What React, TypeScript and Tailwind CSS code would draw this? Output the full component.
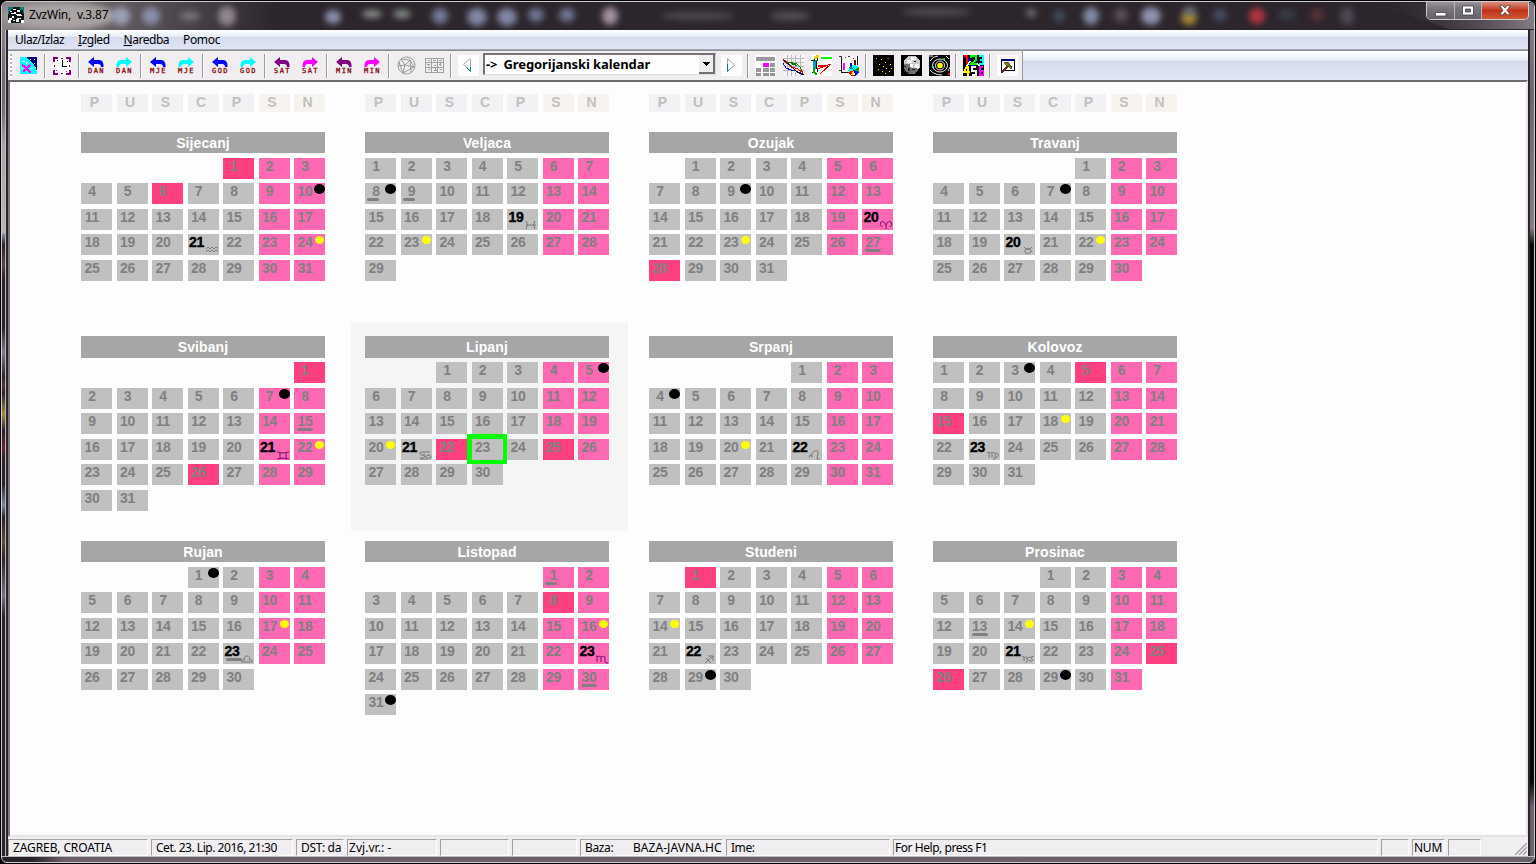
import React from "react";

type Kind = "new" | "full";

interface MonthData {
  name: string;
  start: number;
  days: number;
  holidays?: number[];
  underlined?: number[];
  newMoon: number;
  fullMoon: number;
  zodiacDay: number;
  zodiac: string;
  selected?: number;
}

const MONTHS: MonthData[] = [
  { name: "Sijecanj", start: 4, days: 31, holidays: [1, 6], newMoon: 10, fullMoon: 24, zodiacDay: 21, zodiac: "M0 3l2-2 2 2 2-2 2 2 2-2 2 1M0 6l2-2 2 2 2-2 2 2 2-2 2 1" },
  { name: "Veljaca", start: 0, days: 29, underlined: [8, 9], newMoon: 8, fullMoon: 23, zodiacDay: 19, zodiac: "M1 0q3 3.500 0 8M10 0q-3 3.500 0 8M1 4h10" },
  { name: "Ozujak", start: 1, days: 31, holidays: [28], underlined: [27], newMoon: 9, fullMoon: 23, zodiacDay: 20, zodiac: "M2 6Q-1 4 1 1q3-2 5 3v4M10 6q3-2 1-5q-3-2-5 3" },
  { name: "Travanj", start: 4, days: 30, newMoon: 7, fullMoon: 22, zodiacDay: 20, zodiac: "M2 1q1 2 4 2t4-2M6 3q-4 0-3 3t6 0q1-3-3-3" },
  { name: "Svibanj", start: 6, days: 31, holidays: [1, 26], underlined: [15], newMoon: 7, fullMoon: 22, zodiacDay: 21, zodiac: "M0 1q6 2 12 0M0 8q6-2 12 0M3 2v5M9 2v5" },
  { name: "Lipanj", start: 2, days: 30, holidays: [22, 25], newMoon: 5, fullMoon: 20, zodiacDay: 21, zodiac: "M11 1H3Q0 1 1 3t3 1l5 3q3 1 3-1t-3-2L4 7H1M1 8h8M4 4l2-1", selected: 23 },
  { name: "Srpanj", start: 4, days: 31, newMoon: 4, fullMoon: 20, zodiacDay: 22, zodiac: "M1 7a1.500 1.500 0 1 1 2-1q-1-5 3-6t3 3q-1 3-1 5l3 0" },
  { name: "Kolovoz", start: 0, days: 31, holidays: [5, 15], newMoon: 3, fullMoon: 18, zodiacDay: 23, zodiac: "M0 1l2 1v5M2 2q3-2 3 1v4M5 2q3-2 3 1v5M8 3q4-2 3 2l-5 4" },
  { name: "Rujan", start: 3, days: 30, underlined: [23], newMoon: 1, fullMoon: 17, zodiacDay: 23, zodiac: "M0 7h12M0 5h4q-2-4 2-4t2 4h4" },
  { name: "Listopad", start: 5, days: 31, holidays: [8], underlined: [1, 30], newMoon: 31, fullMoon: 16, zodiacDay: 23, zodiac: "M0 1l1 0v6M1 2q4-2 4 1v4M5 2q4-2 4 1v4q0 1 3 1" },
  { name: "Studeni", start: 1, days: 30, holidays: [1], newMoon: 29, fullMoon: 14, zodiacDay: 22, zodiac: "M2 8L10 1M5 1h5v5M3 3l5 5" },
  { name: "Prosinac", start: 3, days: 31, holidays: [25, 26], underlined: [13], newMoon: 29, fullMoon: 14, zodiacDay: 21, zodiac: "M0 1l2 1v4M2 3q3-3 3 1t-1 4M5 4q3-4 5 0t-4 1M9 2l3-1" },
];

const WEEKDAYS = ["P", "U", "S", "C", "P", "S", "N"];

function Moon({ kind }: { kind: Kind }) {
  return kind === "new" ? (
    <span className="absolute left-[20px] top-px h-[10px] w-[11px] rounded-[50%] bg-black" />
  ) : (
    <span className="absolute left-[21px] top-[2px] h-[8px] w-[9px] rounded-[50%] bg-[#ffff00]" />
  );
}

function Day({ n, col, m }: { n: number; col: number; m: MonthData }) {
  const weekend = col > 4;
  const holiday = m.holidays?.includes(n);
  const bg = holiday ? "bg-[#ff4080]" : weekend ? "bg-[#ff69b4]" : "bg-[#c0c0c0]";
  const isZodiac = m.zodiacDay === n;
  return (
    <div className={`relative h-[21px] w-[31px] ${bg}`}>
      <div
        className={`w-[22px] pt-px text-center text-[14px] leading-[15px] font-bold tracking-[-0.2px] ${
          isZodiac ? "pr-[4px] text-black [-webkit-text-stroke:0.4px_black]" : "text-[#808080]"
        }`}
      >
        {n}
      </div>
      {m.underlined?.includes(n) && (
        <span
          className={`absolute top-[15px] h-[3px] rounded-full bg-[#808080] ${
            n > 9 ? "left-[3px] w-[16px]" : "left-[2px] w-[12px]"
          }`}
        />
      )}
      {m.newMoon === n && <Moon kind="new" />}
      {m.fullMoon === n && <Moon kind="full" />}
      {isZodiac && (
        <svg className="absolute top-[12px] left-[18px] overflow-visible" width="12" height="9" viewBox="0 0 12 9" fill="none" stroke={weekend ? "#700070" : "#707070"} strokeWidth="0.9">
          <path d={m.zodiac} />
        </svg>
      )}
      {m.selected === n && (
        <span className="absolute -top-[5px] -left-[5px] z-10 h-[30px] w-[40px] border-[5px] border-r-4 border-b-4 border-[#00ff00]" />
      )}
    </div>
  );
}

function Month({ m }: { m: MonthData }) {
  const cells: number[] = [];
  for (let i = 1; i <= m.days; i++) cells.push(i);
  return (
    <section className="relative h-[204.5px] w-[244px]">
      {m.selected && <div className="absolute -top-[14px] -left-[14px] h-[208px] w-[277px] bg-[#f3f6f3]" />}
      <h2 className="relative h-[21.500px] bg-[#a6a6a6] text-center text-[14px] leading-[22px] font-bold tracking-[0.1px] text-white">
        {m.name}
      </h2>
      <div className="relative mt-[4.300px] grid auto-rows-[21px] grid-cols-[repeat(7,31px)] gap-x-[4.500px] gap-y-[4.500px]">
        {Array.from({ length: m.start }, (_, i) => (
          <div key={`e${i}`} />
        ))}
        {cells.map((n) => (
          <Day key={n} n={n} col={(m.start + n - 1) % 7} m={m} />
        ))}
      </div>
    </section>
  );
}

function Btn({ children }: { children: React.ReactNode }) {
  return <div className="flex h-[29px] w-[28px] shrink-0 items-center justify-center">{children}</div>;
}

function Sep() {
  return (
    <div className="flex w-[6px] shrink-0 justify-center py-[3px]">
      <div className="h-[24px] w-[2px] border-l border-[#9a989b] bg-white" />
    </div>
  );
}

function Step({ label, color, right }: { label: string; color: string; right?: boolean }) {
  return (
    <div className="flex h-[29px] w-[28px] shrink-0 flex-col items-center pt-[6px]">
      <svg width="16" height="10" viewBox="0 0 16 10" fill={color} className={right ? "-scale-x-100" : ""}>
        <path d="M0 5L6 0V3H11Q15 3 15.500 8V10H13Q13 7 10 7H6V10Z" />
      </svg>
      <div className="mt-px h-[6px] pl-px font-['DejaVu_Sans_Mono',monospace] text-[7px] leading-[7px] tracking-[1.400px] text-[#800000] [-webkit-text-stroke:0.25px_#800000]">
        {label}
      </div>
    </div>
  );
}

function Steps({ label, a, b }: { label: string; a: string; b: string }) {
  return (
    <>
      <Step label={label} color={a} />
      <Step label={label} color={b} right />
      <Sep />
    </>
  );
}

function Icon({ children, size = 21 }: { children: React.ReactNode; size?: number }) {
  return (
    <Btn>
      <svg width={size} height={size} viewBox={`0 0 ${size} ${size}`} fill="none" shapeRendering="crispEdges">
        {children}
      </svg>
    </Btn>
  );
}

const STARS = [[3, 3], [8, 4], [15, 3], [12, 7], [6, 9], [17, 9], [10, 11], [13, 13], [5, 14], [9, 16], [16, 16], [12, 18], [18, 13]];

function Toolbar() {
  return (
    <div className="flex h-[29px] shrink-0 bg-[linear-gradient(to_bottom,#fff_0,#e9f0f8_30%,#d5dbed_36%,#e2e7f5_100%)]">
      <div className="flex w-[1015px] shrink-0 border-r border-[#9a989b] bg-[#f0eef1]">
        <div className="w-[6px] shrink-0 py-[3px] pl-[2px]">
          <div className="h-[24px] w-[2px] bg-[repeating-linear-gradient(to_bottom,#b4b2b5_0_2px,#fff_2px_4px)]" />
        </div>
        <Icon size={17}>
          <path fill="#00ffff" d="M0 0h9l3 3 3 5 2 8v1H0z" />
          <path fill="#000080" d="M6 0h11v14l-3-6-3-4z" />
          <path fill="#ffff00" d="M10 2h1v1h-1zM14 2h1v1h-1zM14 6h1v1h-1zM15 10h1v1h-1z" />
          <path fill="#b8ffff" d="M2 4h3v1H2zM6 5h2v2H6zM8 8h3v1H8zM1 10h2v2H1zM10 11h3v1h-3z" />
          <path stroke="#ff00ff" strokeWidth="2" d="M2 8l3 2 4 4 2 2M10 8L3 15" />
        </Icon>
        <Sep />
        <Icon size={18}>
          <path fill="#fff" d="M0 0h18v18H0z" />
          <path fill="#800080" d="M0 0h5v2H2v3H0zM13 0h5v5h-2V2h-3zM0 13h2v3h3v2H0zM16 13h2v5h-5v-2h3z" />
          <path fill="#602030" d="M8 1h2v1H8zM1 8h1v2H1zM16 8h1v2h-1zM8 16h2v1H8zM4 3h1v1H4zM13 14h1v1h-1zM3 13h1v1H3zM14 4h1v1h-1z" />
          <path fill="#111" d="M9 3h1v7H9zM9 9h5v1H9z" />
        </Icon>
        <Sep />
        <Steps label="DAN" a="#0000ff" b="#00ffff" />
        <Steps label="MJE" a="#0000ff" b="#00ffff" />
        <Steps label="GOD" a="#0000ff" b="#00ffff" />
        <Steps label="SAT" a="#800080" b="#ff00ff" />
        <Steps label="MIN" a="#800080" b="#ff00ff" />
        <Btn>
          <svg width="19" height="19" viewBox="0 0 19 19" fill="none" stroke="#9b9b9b">
            <circle cx="9.5" cy="9.500" r="8.500" />
            <path d="M4 3l9 1 4 7M4 3l4 6 9 2M13 4L8 9 1 10M8 9l-2 8M2 6l4 11 11-6M13 4l1 12" />
          </svg>
        </Btn>
        <Icon size={19}>
          <path stroke="#a0a0a0" d="M.5 2v15M6.500 2v15M12.500 2v15M18.500 2v15M0 2.500h19M0 6.500h19M0 11.500h19M0 16.500h19M3 4.500h2M8 4.500h3M14 4.500h3M2 8.500h3M9 9.500h2M14 8.500h2M3 13.500h2M9 14.500h3M15 13.500h2M3.500 8v2M10.500 12v3M15.500 7v3" />
        </Icon>
        <Sep />
        <Btn>
          <svg width="21" height="21" viewBox="0 0 21 21" fill="none">
            <path fill="#fdfdfd" d="M0 0h21v21H0z" />
            <path stroke="#aaa" d="M12.500 16L5.500 9.500L12 3.500M12.500 4v8" />
            <path stroke="#008080" d="M12.500 12v4.500l-4-4" />
          </svg>
        </Btn>
        <div className="mt-[2px] mr-px ml-px flex h-[22px] w-[233px] shrink-0 items-stretch self-start border-t-2 border-r border-b border-l-2 border-t-[#747276] border-r-[#d8d6d9] border-b-[#e0dee1] border-l-[#747276] bg-[#fdfdfd]">
          <div className="flex flex-1 gap-[6px] pl-px text-[13px] leading-[19px] font-bold tracking-[-0.080px] whitespace-pre text-black">
            <span>{"->"}</span>
            <span>Gregorijanski kalendar</span>
          </div>
          <div className="flex w-[16px] items-center justify-center border-r-2 border-b-2 border-[#707073] bg-[#f0eef1]">
            <svg width="8" height="4" shapeRendering="crispEdges"><path d="M0 0h8L4 4z" /></svg>
          </div>
        </div>
        <Btn>
          <svg width="21" height="21" viewBox="0 0 21 21" fill="none">
            <path fill="#fdfdfd" d="M0 0h21v21H0z" />
            <path stroke="#aaa" d="M6.500 10V3.500l7 6.500-6 5.500" />
            <path stroke="#008080" d="M6.500 9v7.500l2-2" />
          </svg>
        </Btn>
        <Sep />
        <Icon>
          <path fill="#fff" d="M0 0h21v21H0z" />
          <path fill="#999" d="M1 2h19v4H1zM15 8h5v4h-5zM1 13h5v4H1zM8 13h6v4H8zM15 13h5v4h-5zM1 18h5v3H1zM8 18h6v3H8zM15 18h5v3h-5z" />
          <path fill="#f0f" d="M8 8h6v4H8z" />
        </Icon>
        <Icon>
          <path fill="#f6f4f7" d="M0 0h21v21H0z" />
          <path stroke="#bbb" d="M4.500 0v21M8.500 0v21M12.500 0v21M17.500 0v21M0 3.500h21M0 7.500h21M0 11.500h21M0 15.500h21" />
          <path stroke="#008000" d="M3 7.500h5l6 1.500 3 3 3 6M8 8.500l6 2" />
          <path stroke="#f00" d="M0 4l6 5 3 3 6 2 5 4M0 5l6 5 3 3" />
          <path stroke="#00d" d="M0 8l3 5 5 2h4l4 3 5 2" />
          <path stroke="#111" d="M0 5l7 5 7 7 4 1 3 2" />
        </Icon>
        <Icon>
          <path fill="#fff" d="M0 0h21v21H0z" />
          <path stroke="#00a0b0" strokeWidth="3" d="M5 5Q2 9 4 14" />
          <path stroke="#111" d="M3 2v3H0M7 3Q4 9 7 17M1 18l4-1" />
          <path stroke="#ffc800" strokeWidth="3" d="M7 0L4 4" />
          <path stroke="#0a0" strokeWidth="2" d="M3 13v4l3 3" />
          <path stroke="#0f0" strokeWidth="2" d="M10 3h11" />
          <path stroke="#e00" d="M7 11.500h8M7 10.500h8L20 9 9 19M6 14L20 9" />
        </Icon>
        <Icon>
          <path fill="#fff" d="M1 1h19v19H1z" />
          <path stroke="#111" d="M2.500 1v16M2 17.500h10M18.500 1v9" />
          <path fill="#333" d="M0 1h3v1H0zM6 2h1v1H6zM9 1h2v1H9zM14 3h1v1h-1zM0 15h3v1H0z" />
          <path stroke="#f0f" strokeWidth="2" d="M5 8v7" />
          <path stroke="#800000" strokeWidth="2" d="M16 5v7" />
          <path stroke="#00c" strokeWidth="2" d="M12 8v7" />
          <circle cx="15" cy="15.500" r="5.500" fill="#00ffff" />
          <path fill="#f00" d="M15 15l-6 2 3 4h3z" />
          <path fill="#00f" d="M15 15v6l3-1 2-3z" />
          <path fill="#ff0" d="M15 15l-3 5h4z" />
          <path fill="#0a0" d="M15 15l5-3v5z" />
          <path fill="#008080" d="M9 13l3-3 3 5z" />
        </Icon>
        <Sep />
        <Icon>
          <path fill="#000" d="M0 0h21v21H0z" />
          {STARS.map(([x, y], i) => (
            <path key={i} fill={i === 2 ? "#ff3030" : "#ffff00"} d={`M${x} ${y}h1v1h-1z`} />
          ))}
        </Icon>
        <Icon>
          <path fill="#000" d="M0 0h21v21H0z" />
          <circle cx="11" cy="9" r="8.500" fill="#c8c8c8" />
          <path fill="#707070" d="M3 9h7v4h5l3 2-5 4H7l-4-4z" />
          <path fill="#fff" d="M10 2h5v3h-5zM6 5h5v3H6zM14 9h4v4h-4zM9 9h3v3H9z" />
          <path fill="#222" d="M3 11h2v1H3zM7 13h2v3H7zM13 6h2v1h-2zM3 14h1v3H3zM11 14h3v1h-3zM5 17h3v1H5z" />
        </Icon>
        <Btn>
          <svg width="21" height="21" viewBox="0 0 21 21" fill="none">
            <path fill="#000" d="M0 0h21v21H0z" />
            <g stroke="#fff" strokeWidth=".9">
              <circle cx="11" cy="10.500" r="4.500" />
              <ellipse cx="11" cy="10.500" rx="7.500" ry="6.500" />
              <path d="M1 6q3-5 8-5M1 15q4 5 12 5M19 16l2-4M0 1h4M17 1l3 3" />
            </g>
            <circle cx="11" cy="10.500" r="2.800" fill="#ff0" />
            <path fill="#00d0d0" d="M3 11h2v2H3z" />
            <path fill="#0c0" d="M14 3h2v2h-2z" />
            <path fill="#f00" d="M19 18h2v2h-2zM9 15h2v1H9z" />
          </svg>
        </Btn>
        <Sep />
        <Icon>
          <path fill="#000" d="M0 0h21v21H0z" />
          <path stroke="#f00" strokeWidth="2" d="M1 2l3-2v10" />
          <path stroke="#0f0" strokeWidth="2" d="M8 3V1h5v4L8 9h6" />
          <path stroke="#0ff" strokeWidth="2" d="M16 1h4v4h-3M20 5v4h-4" />
          <path stroke="#ff0" strokeWidth="2" d="M4 11L1 17h6M5 11v10" />
          <path stroke="#fff" strokeWidth="1.500" d="M13 12H9v4h4v4H9M7 6l-3 5M14 9l4 3" />
          <path stroke="#f0f" strokeWidth="2" d="M20 12h-3v8h4v-4h-4" />
          <path fill="#00c" d="M5 3h2v3H5zM14 4h1v4h-1zM8 10h3v1H8zM1 12h1v2H1z" />
        </Icon>
        <Sep />
        <Icon>
          <path fill="#fdfdfd" d="M0 0h21v21H0z" />
          <path stroke="#000" d="M4.500 4v11.500H17.500V4" />
          <path fill="#000080" d="M4 4h14v2H4z" />
          <path stroke="#702020" strokeWidth="1.500" d="M4 18l7-7" />
          <path fill="#808000" stroke="#222" strokeWidth=".7" d="M7 8l4-1 4 5-1 1.500-3-2-2-2z" />
        </Icon>
      </div>
    </div>
  );
}

const SPOTS: [number, number, number, number, string][] = [
  [60, 15, 56, 14, "#a9a3a4"], [121, 15, 9, 9, "#9ba3b5"], [151, 15, 9, 9, "#8890ab"], [190, 15, 10, 5, "#777078"],
  [227, 15, 9, 10, "#8f858f"], [333, 16, 8, 7, "#8c8fae"], [372, 13, 10, 4, "#88908a"], [402, 13, 9, 4, "#88908a"],
  [440, 15, 8, 8, "#737a97"], [477, 16, 10, 9, "#8186a4"], [507, 16, 10, 9, "#8186a4"], [536, 14, 8, 7, "#6e7590"],
  [567, 14, 8, 7, "#6e7590"], [610, 15, 8, 9, "#a592a2"], [698, 15, 38, 4, "#4e4850"], [790, 15, 20, 5, "#514a52"],
  [937, 11, 35, 4, "#4e4850"], [1031, 12, 5, 4, "#77737b"], [1059, 15, 6, 6, "#3c4d60"], [1091, 15, 8, 9, "#7f8ba5"],
  [1121, 14, 7, 7, "#5b4e55"], [1151, 15, 10, 9, "#8e92ac"], [1189, 17, 8, 7, "#a88832"], [1190, 10, 6, 4, "#64718c"],
  [1220, 14, 7, 7, "#44485e"], [1257, 15, 8, 8, "#b2353f"], [1287, 14, 9, 6, "#343a44"], [1317, 14, 7, 6, "#563034"],
  [1347, 15, 7, 9, "#504a56"],
];

function TitleBar() {
  return (
    <div className="relative flex h-[28px] shrink-0 items-start bg-linear-to-r from-[#8b8587] via-[#2c252c] via-18% to-[#2c252c]">
      <svg className="absolute inset-0" width="1532" height="28" viewBox="2 1 1532 28">
        <defs>
          <filter id="soft" x="-60%" y="-60%" width="220%" height="220%"><feGaussianBlur stdDeviation="3.200" /></filter>
          <linearGradient id="edge"><stop offset="0" stopColor="#2c252c" stopOpacity="0" /><stop offset="1" stopColor="#857c85" /></linearGradient>
        </defs>
        {SPOTS.map(([x, y, rx, ry, c], i) => (
          <ellipse key={i} cx={x} cy={y} rx={rx} ry={ry} fill={c} filter="url(#soft)" />
        ))}
        <path fill="url(#edge)" d="M1370 2L1534 2V28H1450Z" />
      </svg>
      <svg className="relative mt-[5px] ml-[6px]" width="16" height="16" viewBox="0 0 16 16" shapeRendering="crispEdges">
        <path fill="#101818" d="M0 0h16v16H0z" />
        <path fill="#008080" d="M0 0h5v2H3v2H1v3H0zM12 0h4v6h-1V3h-3z" />
        <path fill="#fff" d="M5 2h3v1H5zM9 3h3v2H9zM3 6h3v1H3zM6 5h2v2H6zM8 7h5v1H8zM9 8h5v1H9zM4 9h2v2H4zM1 11h3v2H1zM0 13h3v3H0zM9 11h4v1H9zM8 12h3v3H8zM5 13h2v1H5zM13 13h3v3h-3zM2 4h2v1H2z" />
      </svg>
      <div className="relative mt-[4px] ml-[5px] text-[12px] leading-[17px] tracking-[-0.2px] whitespace-pre text-black">ZvzWin,  v.3.87</div>
      <div className="relative mr-[5px] ml-auto flex h-[18px] overflow-hidden rounded-b-[5px] border border-t-0 border-[#d0cbd0]">
        <div className="flex w-[28px] items-center justify-center border-r border-[#b9b4b9] bg-linear-to-b from-[#99949a] via-[#77717a] via-45% to-[#67616a]">
          <svg width="12" height="12"><path fill="#fff" stroke="#444" strokeWidth=".8" d="M.5 7.500h10.500v3.500H.5z" /></svg>
        </div>
        <div className="flex w-[27px] items-center justify-center border-r border-[#b9b4b9] bg-linear-to-b from-[#99949a] via-[#77717a] via-45% to-[#67616a]">
          <svg width="12" height="11"><path fill="#fff" stroke="#444" strokeWidth=".8" fillRule="evenodd" d="M.5 1h11v9H.5zM3.500 4h5v3h-5z" /></svg>
        </div>
        <div className="flex w-[46px] items-center justify-center bg-linear-to-b from-[#d99080] via-[#c0301a] via-50% to-[#d05a38]">
          <svg width="12" height="11"><path fill="#fff" stroke="#444" strokeWidth=".8" d="M.6.600h3.200L6 3 8.200.600h3.200L8 5.300l3.500 4.500H8.200L6 7.300 3.800 9.800H.6L4 5.300z" /></svg>
        </div>
      </div>
    </div>
  );
}

function Pane({ w, children }: { w: string; children?: React.ReactNode }) {
  return (
    <div className={`h-[17px] shrink-0 overflow-hidden border-t border-r border-b border-l border-t-[#a09ea1] border-r-white border-b-white border-l-[#a09ea1] text-[12px] leading-[16px] whitespace-pre text-black ${w}`}>
      {children}
    </div>
  );
}

function StatusBar() {
  return (
    <div className="relative flex h-[19px] shrink-0 items-start gap-[3px] bg-[#f0eef1] pt-[2px]">
      <Pane w="w-[140px] pl-[4px] tracking-[-0.100px]">ZAGREB, CROATIA</Pane>
      <Pane w="w-[142px] pl-[4px] tracking-[-0.470px]">Cet. 23. Lip. 2016, 21:30</Pane>
      <Pane w="w-[48px] pl-[4px] tracking-[-0.350px]">DST: da</Pane>
      <Pane w="w-[90px] pl-px tracking-[0.050px]">Zvj.vr.: -</Pane>
      <Pane w="w-[69px]" />
      <Pane w="w-[65px]" />
      <Pane w="w-[143px] pl-[4px] tracking-[-0.350px]">
        <span className="inline-block w-[48px]">Baza:</span>
        <span className="tracking-[0.050px]">BAZA-JAVNA.HC</span>
      </Pane>
      <Pane w="w-[164px] pl-[4px] tracking-[-0.450px]">Ime:</Pane>
      <Pane w="w-[485px] pl-px tracking-[-0.450px]">For Help, press F1</Pane>
      <Pane w="w-[28px]" />
      <Pane w="w-[33px] pl-px tracking-[-0.250px]">NUM</Pane>
      <Pane w="w-[33px]" />
      <svg className="absolute right-px bottom-px" width="12" height="12" stroke="#a09ea1" strokeWidth="1.300">
        <path d="M0 12L12 0M4 12l8-8M8 12l4-4" />
      </svg>
    </div>
  );
}

export default function App() {
  return (
    <div className="h-[864px] w-[1536px] overflow-hidden bg-black pt-px pl-px font-['Noto_Sans',sans-serif]">
      <div className="flex h-[862px] w-[1534px] flex-col overflow-hidden rounded-[6px] border border-[#cfcacf] bg-[#6a5f6b]">
        <TitleBar />
        <div className="flex min-h-0 flex-1">
          <div className="w-[4px] shrink-0 bg-[linear-gradient(to_bottom,#8b8587_0,#6f6870_6%,#787078_10%,#aaa4aa_14%,#b9b3b8_24.500%,#8892a4_24.700%,#2b222a_26%,#5b444b_28.500%,#2b222a_30%,#2b222a_36%,#837a89_39%,#2b222a_42%,#5c3038_43%,#2b222a_44%,#a48b35_46.500%,#2b222a_48.500%,#6e2028_50.500%,#2b222a_52%,#2b222a_55%,#7789a8_57.500%,#2b222a_59%,#5c4c30_62%,#2b222a_64%,#7b7080_68.500%,#2b222a_71%,#2b222a_100%)]" />
          <div className="flex min-w-0 flex-1 flex-col border-x-2 border-x-[#2a252b] bg-[#f0eef1] shadow-[-1px_0_0_#bdb8be,1px_0_0_#bdb8be]">
            <nav className="flex h-[20px] shrink-0 gap-[14px] border-b border-b-[#a2a6b6] bg-[linear-gradient(to_bottom,#fff_0,#e9f0f8_32%,#d5dbed_40%,#e0e5f4_100%)] pl-[7px] text-[12px] leading-[20px] tracking-[-0.480px] text-black">
              <span>Ulaz/Izlaz</span>
              <span><u>I</u>zgled</span>
              <span><u>N</u>aredba</span>
              <span className="tracking-[-0.350px]">Pomoc</span>
            </nav>
            <div className="h-px shrink-0 bg-[#909094]" />
            <Toolbar />
            <main className="min-h-0 flex-1 border-t-2 border-r-2 border-b-2 border-l-2 border-t-[#6c6a6d] border-r-[#e4e2e5] border-b-[#e4e2e5] border-l-[#7c7a7d] bg-[#fdfdfd] pt-[12px] pl-[71px] font-['Liberation_Sans',sans-serif]">
              <div className="mb-[19.900px] flex gap-[40px]">
                {[0, 1, 2, 3].map((k) => (
                  <div key={k} className="flex w-[244px] gap-[4.500px]">
                    {WEEKDAYS.map((d, i) => (
                      <div
                        key={i}
                        className={`h-[18px] w-[31px] shrink-0 pr-[4px] text-center text-[14px] leading-[17px] font-bold text-[#c0c0c0] ${i > 4 ? "bg-[#f7f4f0]" : "bg-[#f2f1f4]"}`}
                      >
                        {d}
                      </div>
                    ))}
                  </div>
                ))}
              </div>
              <div className="grid grid-cols-[repeat(4,244px)] gap-x-[40px]">
                {MONTHS.map((m) => (
                  <Month key={m.name} m={m} />
                ))}
              </div>
            </main>
            <StatusBar />
          </div>
          <div className="w-[4px] shrink-0 bg-[linear-gradient(to_bottom,#857c85_0,#6f6670_8%,#857c85_24%,#0a080a_26%,#0a080a_91%,#6a5f6b_94%)]" />
        </div>
        <div className="h-[6px] shrink-0 border-t border-[#bdb8be] bg-linear-to-r from-[#2b222a] from-2% to-[#6a5f6b] to-4%" />
      </div>
    </div>
  );
}
